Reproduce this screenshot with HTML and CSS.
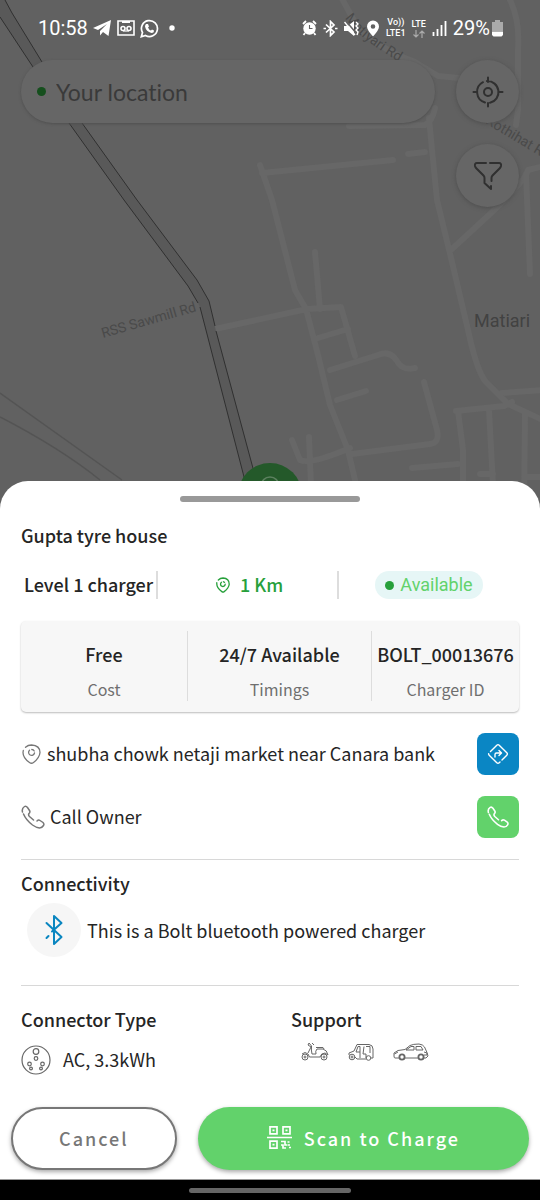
FILE: index.html
```html
<!DOCTYPE html>
<html lang="en">
<head>
<meta charset="utf-8">
<meta name="viewport" content="width=device-width, initial-scale=1">
<title>Charger details</title>
<link rel="stylesheet" href="styles.css">
</head>
<body>
<div class="screen">
  <section class="map" aria-label="Map">
    <svg class="map-art" viewBox="0 0 540 521" preserveAspectRatio="xMidYMin slice" aria-hidden="true">
      <g class="road">
        <path d="M340 -5L358 28Q385 52 415 62L438 76L470 79M510 0Q520 20 518 50V110L516 125M429 118L432 150L437 200L452 262L468 330Q477 372 486 382L508 404L545 421M349 126L425 125Q432 122 435 108M262 173L393 160M408 154L425 152M260 165L272 200L295 290L306 309L318 355L330 405L348 450L362 510M315 252L320 309M215 329L307 309L341 307L355 356M318 338L348 329M330 370L378 355Q390 350 397 361Q402 371 415 368M337 400L366 391M424 382L437 430Q440 443 430 444L352 454M292 440L300 460Q310 465 350 448M309 437L312 510M452 249L490 214Q526 180 528 170L548 165M526 174L530 274M502 393L545 390M456 411L504 406L512 402M458 411L463 450V510M489 410L493 485V510M525 414L524 510M412 468L458 464M480 474H493M525 477H548"/>
      </g>
      <path class="road-thin" d="M0 393L122 480M0 417Q60 448 100 480"/>
      <path class="rail-fill" d="M5 0L12 13L42 62L82 123L137 200L197 280L209 301L216 331L254 472L267 520H255L243 473L200 307L198 303L188 286L124 200L69 123L33 67L0 17V0Z"/>
      <path class="rail-line" d="M5 0L12 13L42 62L82 123L137 200L197 280L209 301L215 326M216 331L254 472L267 520M0 17L33 67L69 123L124 200L188 286L198 303M200 307L243 473L255 520"/>
      <g class="map-text">
        <path id="matiyari" class="label-path" d="M345 18Q360 40 403 64"/>
        <text><textPath href="#matiyari">Matiyari Rd</textPath></text>
        <text transform="translate(103 338) rotate(-16)">RSS Sawmill Rd</text>
        <text transform="translate(485 123) rotate(31)">Kothihat Rd</text>
        <text class="town" x="474" y="327">Matiari</text>
      </g>
      <circle cx="270" cy="495" r="32" fill="#24592a"/>
      <circle cx="270" cy="486" r="9" fill="none" stroke="#5c805f" stroke-width="1.5"/>
    </svg>

    <header class="status">
      <div class="status-group">
        <span>10:58</span>
        <svg width="19" height="18" viewBox="0 0 19 18"><path fill="#fff" d="M0 9L18 1L15.500 17L10 13L7 16.500V12L14 5L5 11Z"/></svg>
        <svg width="18" height="18" viewBox="0 0 18 18" fill="none" stroke="#fff" stroke-width="1.6"><path d="M1 2H17V16H1Z"/><path d="M5 3H13" stroke-width="2"/><circle cx="6" cy="9.500" r="2"/><circle cx="12" cy="9.500" r="2"/><path d="M6 12H12" stroke-width="1.200"/></svg>
        <svg width="19" height="19" viewBox="0 0 19 19"><path d="M1.300 17.700L2.500 13.500A8 8 0 1 1 5.500 16.500Z" fill="none" stroke="#fff" stroke-width="1.700"/><path fill="#fff" d="M6 5L8 5L9 7.500L8 8.500Q9 11 11 11.500L12 10.500L14 11.500Q14 14 11.500 14Q6 12.500 5 7.500Q5 6 6 5Z"/></svg>
        <svg class="more" width="6" height="6" viewBox="0 0 6 6"><circle cx="3" cy="3" r="2.700" fill="#fff"/></svg>
      </div>
      <div class="status-group status-right">
        <svg width="15" height="16" viewBox="0 0 15 16"><circle cx="7.500" cy="8.500" r="6.200" fill="#fff"/><path d="M1 4L4 1M14 4L11 1M3 13L1.500 15M12 13L13.500 15" stroke="#fff" stroke-width="1.800"/><path d="M7.500 5V8.500H10.500" fill="none" stroke="#616161" stroke-width="1.100"/></svg>
        <svg width="15" height="17" viewBox="0 0 15 17"><path d="M3 4.500L11 12L7.500 15.500V1.500L11 5L3 12.500M0.500 8.500H3M12 8.500H14.500" fill="none" stroke="#fff" stroke-width="1.700"/></svg>
        <svg width="16" height="17" viewBox="0 0 16 17"><path fill="#fff" d="M0 6H4L10 1V16L4 11H0Z"/><path d="M2 1L12 13" stroke="#616161" stroke-width="1.500"/><path d="M0.500 2L11 15M12 2L14 4L12 6L14 8L12 10L14 12L13 15" fill="none" stroke="#fff" stroke-width="1.400"/></svg>
        <svg width="14" height="17" viewBox="0 0 14 17"><path fill="#fff" fill-rule="evenodd" d="M7 0.500A6 6 0 0 1 13 6.500Q13 10 7 16.500Q1 10 1 6.500A6 6 0 0 1 7 0.500ZM7 4.200A2.300 2.300 0 1 0 7 8.800A2.300 2.300 0 1 0 7 4.200Z"/></svg>
        <span class="tiny"><span>Vo))</span><span>LTE1</span></span>
        <span class="tiny"><span>LTE</span><svg width="12" height="8" viewBox="0 0 12 8"><path d="M3 0V7M0.500 4.500L3 7L5.500 4.500M9 8V1M6.500 3.500L9 1L11.500 3.500" fill="none" stroke="#aaa" stroke-width="1.200"/></svg></span>
        <svg width="15" height="16" viewBox="0 0 15 16"><path d="M1.500 16V12M5.500 16V9M9.500 16V5M13.500 16V1" stroke="#fff" stroke-width="1.800"/></svg>
        <span class="battery">29%<svg width="11" height="17" viewBox="0 0 11 17"><path fill="#aaa" d="M3 0H8V2H11V11H0V2H3Z"/><path fill="#fff" d="M0 11.500H11V15L9.500 16.500H1.500L0 15Z"/></svg></span>
      </div>
    </header>

    <div class="controls">
      <label class="search"><span class="dot"></span><input type="text" placeholder="Your location" aria-label="Your location"></label>
      <div class="map-buttons">
        <button class="round" type="button" aria-label="Locate me">
          <svg width="32" height="32" viewBox="0 0 32 32" fill="none" stroke="#303030" stroke-width="2" stroke-linecap="round"><path d="M13 26.500A11 11 0 0 1 11 6.200M15 5.100A11 11 0 0 1 18 26.800M16 1.500V6M26.500 16H30.500M16 27V30.500M1.500 16H5M9.200 24.500L9.800 25"/><circle cx="16" cy="16" r="4"/></svg>
        </button>
        <button class="round" type="button" aria-label="Filter">
          <svg width="30" height="30" viewBox="0 0 30 30" fill="none" stroke="#303030" stroke-width="2" stroke-linecap="round" stroke-linejoin="round"><path d="M13 2H4Q1.500 2 2 5Q2.300 6 3 7L10.500 14.500Q11.500 15.500 11.500 17V22L18 28V25M17 2H26Q28.500 2 28 5Q27.700 6 27 7L19.500 14.500Q18.500 15.500 18.500 17V20"/></svg>
        </button>
      </div>
    </div>
  </section>

  <main class="sheet">
    <div class="handle"></div>
    <h1 class="title">Gupta tyre house</h1>

    <div class="meta">
      <div class="meta-item level">Level 1 charger</div>
      <div class="meta-item distance">
        <svg width="14" height="16" viewBox="0 0 18 20" fill="none" stroke="#27a03b" stroke-width="1.700" stroke-linecap="round"><path d="M3 3.500Q5.500 1 9 1Q17 1.500 17 9Q16.500 14 10.500 18.500Q9 19.500 7.500 18.500Q1 14 1 8.500V7"/><path d="M7 6.500A3 3 0 1 0 11.800 9M9.500 5.800L11 6.500"/></svg>
        <span>1 Km</span>
      </div>
      <div class="meta-item"><span class="badge"><span class="dot"></span>Available</span></div>
    </div>

    <div class="stats">
      <div class="stat"><strong>Free</strong><span>Cost</span></div>
      <div class="stat"><strong>24/7 Available</strong><span>Timings</span></div>
      <div class="stat"><strong>BOLT_00013676</strong><span>Charger ID</span></div>
    </div>

    <div class="row">
      <svg width="21" height="20" viewBox="0 0 19 20" fill="none" stroke="#777" stroke-width="1.300" stroke-linecap="round"><path d="M3.500 3.200Q6 1 9.500 1Q18 1.500 18 8.500Q17.500 14 11.500 18.500Q9.500 20 7.500 18.500Q1 14 1 8.500L1.300 6.500"/><path d="M7.500 6.200A3 3 0 1 0 12.500 9M9.800 5.500Q11.500 5.500 12.200 7"/></svg>
      <span class="row-text">shubha chowk netaji market near Canara bank</span>
      <button class="square blue" type="button" aria-label="Directions">
        <svg width="22" height="22" viewBox="0 0 22 22" fill="none" stroke="#fff" stroke-width="1.400" stroke-linecap="round" stroke-linejoin="round"><path d="M3.500 8.500L9.800 2.200Q11 1 12.200 2.200L19.800 9.800Q21 11 19.800 12.200L15 17M13 19L12.200 19.800Q11 21 9.800 19.800L2.200 12.200Q1.500 11.500 1.600 10.800M8 14V11.500Q8 10 9.500 10H14M12 7.500L14.500 10L12 12.500"/></svg>
      </button>
    </div>
    <div class="row">
      <svg width="24" height="24" viewBox="0 0 24 24" fill="none" stroke="#777" stroke-width="1.500" stroke-linecap="round"><path d="M1.500 7Q0.500 3.500 3.500 1.500Q5 0.500 6.500 2.500L8.500 5.500Q9.500 7 8 8.500Q7 10 8.500 11.500L12.500 15M2.500 9Q5 15 11.500 20Q15 22.500 18.500 23Q21 23 22.500 20.500Q23.500 19 22 17.500L19 15.500Q17.500 14.500 16 16"/></svg>
      <span class="row-text">Call Owner</span>
      <button class="square green" type="button" aria-label="Call owner">
        <svg width="22" height="22" viewBox="0 0 24 24" fill="none" stroke="#fff" stroke-width="1.700" stroke-linecap="round"><path d="M1.500 7Q0.500 3.500 3.500 1.500Q5 0.500 6.500 2.500L8.500 5.500Q9.500 7 8 8.500Q7 10 8.500 11.500L12.500 15M2.500 9Q5 15 11.500 20Q15 22.500 18.500 23Q21 23 22.500 20.500Q23.500 19 22 17.500L19 15.500Q17.500 14.500 16 16"/></svg>
      </button>
    </div>

    <section class="connectivity">
      <h2 class="title">Connectivity</h2>
      <div class="bolt">
        <span class="bubble"><svg width="18" height="32" viewBox="0 0 18 32" fill="none" stroke="#0a86c0" stroke-width="2" stroke-linecap="round" stroke-linejoin="round"><path d="M1.500 9L16.500 23L9 30V2L16.500 9L7 17.500M3.500 22L1.500 24"/></svg></span>
        <span>This is a Bolt bluetooth powered charger</span>
      </div>
    </section>

    <section class="specs">
      <div>
        <h2 class="title">Connector Type</h2>
        <div class="plug">
          <svg width="30" height="30" viewBox="0 0 30 30" fill="none" stroke="#666" stroke-width="1.200"><circle cx="15" cy="15" r="14"/><circle cx="15" cy="6.500" r="2.800"/><circle cx="15" cy="13.500" r="1.800"/><circle cx="8.500" cy="19" r="1.800"/><circle cx="21.500" cy="19" r="1.800"/><circle cx="10" cy="23.500" r="1.400"/><circle cx="20" cy="23.500" r="1.400"/></svg>
          <span class="plug-text">AC, 3.3kWh</span>
        </div>
      </div>
      <div>
        <h2 class="title">Support</h2>
        <div class="vehicles">
          <svg width="28" height="19" viewBox="0 0 28 19" fill="none" stroke="#666" stroke-width="1" stroke-linejoin="round"><circle cx="4" cy="15" r="3"/><circle cx="4" cy="15" r="1"/><circle cx="23" cy="15" r="3"/><circle cx="23" cy="15" r="1"/><path d="M1 12Q4 9 7 12L8.500 15H19Q20 11 24 11L27 13Q26 8 22 7H16Q14 9 15 12H11Q10 8 10.500 4L8 1L7 3L10 5L7 11M11 1L13 3M15 5.500H22L23 7"/></svg>
          <svg width="26" height="18" viewBox="0 0 26 18" fill="none" stroke="#666" stroke-width="1" stroke-linejoin="round"><circle cx="4" cy="14" r="2.800"/><circle cx="4" cy="14" r="1"/><circle cx="20.500" cy="15" r="2.300"/><path d="M1 12V10L6 8L9 1.500H21Q25 2 25 6V15H23M7 14L9 16H18M10 3.500L8 9H12V3.500ZM12 9V15M16 3.500L15 11H18V15M18 3.500H22V10"/></svg>
          <svg width="36" height="18" viewBox="0 0 36 18" fill="none" stroke="#666" stroke-width="1" stroke-linejoin="round"><circle cx="9" cy="14" r="2.600" stroke-width="1.800"/><circle cx="28" cy="14" r="2.600" stroke-width="1.800"/><path d="M6 15H2Q1 15 1 13V10L5 7.500L12 6.500L17 2.500Q20 1 26 1Q30 1.500 31.500 4L34 9.500L35 13L33 15H31M12 15H25M13 7L18 3.500H21V7ZM23 3.500H28L30 7H23ZM1.500 11L5 9M31 9L34 10V12H31"/></svg>
        </div>
      </div>
    </section>

    <div class="actions">
      <button class="pill outline" type="button">Cancel</button>
      <button class="pill solid" type="button">
        <svg width="25" height="25" viewBox="0 0 25 25" fill="none" stroke="#fff" stroke-width="1.700"><path d="M3 1.800H10V8.800H3ZM16 1.800H23V8.800H16ZM3 16.200H10V23.200H3ZM0 12.500H25"/><path d="M5.500 5.300H7.500M18.500 5.300H20.500M5.500 19.700H7.500M14 16.500H18V20H20.500M14 20H16V23H19M20.500 17H22.500M22 22.500H24M21 20L23 20"/></svg>
        <span>Scan to Charge</span>
      </button>
    </div>
  </main>
  <footer class="nav"><span class="nav-pill"></span></footer>
</div>
</body>
</html>
```
FILE: styles.css
```css
* {
  box-sizing: border-box;
}

body {
  margin: 0;
  background: #616161;
  color: #252525;
  font-family: "Noto Sans CJK SC", "Noto Sans", sans-serif;
  font-size: 18px;
  line-height: 24px;
}

button,
input {
  font: inherit;
  border: 0;
  padding: 0;
}

svg {
  flex: none;
}

.screen {
  display: flex;
  flex-direction: column;
  min-height: 100vh;
}

.map {
  position: relative;
  flex: 1;
  min-height: 260px;
  overflow: hidden;
}

.map-art {
  position: absolute;
  inset: 0;
  width: 100%;
  height: 100%;
}

.road {
  fill: none;
  stroke: #676767;
  stroke-width: 6;
  stroke-linejoin: round;
  stroke-linecap: round;
}

.road-thin {
  fill: none;
  stroke: #545454;
  stroke-width: 1.5;
}

.rail-fill {
  fill: #595959;
}

.rail-line {
  fill: none;
  stroke: #303030;
  stroke-width: 1;
}

.label-path {
  fill: none;
}

.map-text {
  fill: #4a4a4a;
  font-family: Roboto, sans-serif;
  font-size: 14px;
}

.town {
  fill: #424242;
  font-size: 18px;
}

.status {
  position: relative;
  display: flex;
  justify-content: space-between;
  padding: 16px 37px 0 38px;
  color: #fff;
  font-family: Roboto, sans-serif;
  font-size: 20px;
}

.status-group {
  display: flex;
  align-items: center;
  gap: 5px;
}

.status-right {
  gap: 6px;
}

.more {
  margin-left: 5px;
}

.tiny {
  display: grid;
  justify-items: center;
  font-size: 9px;
  font-weight: 500;
  line-height: 11px;
}

.battery {
  display: flex;
  align-items: center;
  gap: 2px;
}

.controls {
  position: relative;
  display: flex;
  gap: 21px;
  padding: 20px 21px;
}

.search {
  display: flex;
  flex: 1;
  align-items: center;
  gap: 10px;
  min-width: 0;
  height: 63px;
  padding: 0 16px;
  border-radius: 32px;
  background: #666;
  box-shadow: 0 1px 3px #505050;
}

.dot {
  flex: none;
  width: 9px;
  height: 9px;
  border-radius: 50%;
  background: #27a03b;
}

.search .dot {
  background: #154f1d;
}

.search input {
  flex: 1;
  min-width: 0;
  background: none;
  color: #303030;
  font-family: Lato, sans-serif;
  font-size: 23px;
  font-variant-ligatures: none;
}

.search input::placeholder {
  color: #3a3a3a;
  opacity: 1;
}

.map-buttons {
  display: grid;
  gap: 21px;
}

.round {
  display: grid;
  place-items: center;
  width: 63px;
  height: 63px;
  border-radius: 50%;
  background: #666;
  box-shadow: 0 1px 4px #4e4e4e;
}

.sheet {
  position: relative;
  margin-top: -40px;
  padding: 15px 21px 9px;
  border-bottom: 1px solid #999;
  border-radius: 28px 28px 0 0;
  background: #fff;
}

.handle {
  width: 180px;
  height: 6px;
  margin: 0 auto 21px;
  border-radius: 3px;
  background: #999;
}

.title {
  margin: 0;
  font-size: 18px;
  font-weight: 500;
  line-height: 24px;
}

.meta {
  display: grid;
  grid-template-columns: 137fr 181fr 180fr;
  align-items: center;
  margin-top: 24px;
}

.meta-item {
  display: flex;
  align-items: center;
  justify-content: center;
  height: 28px;
  border-right: 2px solid #ddd;
  font-weight: 500;
  white-space: nowrap;
}

.meta-item:last-child {
  border: 0;
}

.level,
.distance span,
.row-text,
.plug-text {
  padding-bottom: 2px;
}

.distance {
  gap: 10px;
  padding-left: 4px;
  color: #27a03b;
}

.badge {
  display: flex;
  align-items: center;
  gap: 6px;
  height: 28px;
  padding: 0 10px;
  border-radius: 14px;
  background: #e6f6f6;
  color: #62d26b;
  font-family: Roboto, sans-serif;
  font-weight: 400;
}

.stats {
  display: grid;
  grid-template-columns: 166fr 184fr 148fr;
  margin-top: 22px;
  padding: 10px 0 11px;
  border-radius: 5px;
  background: #f7f7f7;
  box-shadow: 0 1px 2px #bbb;
}

.stat {
  display: grid;
  gap: 12px;
  padding: 11px 0 1px;
  border-left: 1px solid #ddd;
  text-align: center;
}

.stat:first-child {
  border: 0;
}

.stat strong {
  font-weight: 500;
}

.stat span {
  color: #6f6f6f;
  font-size: 16px;
  line-height: 22px;
}

.row {
  display: flex;
  align-items: center;
  gap: 5px;
  min-height: 42px;
  margin-top: 21px;
}

.row-text {
  flex: 1;
}

.square {
  display: grid;
  flex: none;
  place-items: center;
  width: 42px;
  height: 42px;
  border-radius: 8px;
}

.blue {
  background: #0a86c4;
}

.green {
  background: #62d26b;
}

.connectivity {
  margin-top: 21px;
  padding: 11px 0 28px;
  border-top: 1px solid #d8d8d8;
  border-bottom: 1px solid #d8d8d8;
}

.bolt {
  display: flex;
  align-items: center;
  gap: 6px;
  margin-top: 8px;
  padding-left: 6px;
}

.bubble {
  display: grid;
  flex: none;
  place-items: center;
  width: 54px;
  height: 54px;
  border-radius: 50%;
  background: #f6f6f6;
}

.specs {
  display: grid;
  grid-template-columns: 270fr 228fr;
  margin-top: 21px;
}

.plug {
  display: flex;
  align-items: center;
  gap: 12px;
  margin-top: 14px;
}

.vehicles {
  display: flex;
  align-items: center;
  gap: 19px;
  margin-top: 11px;
  padding-left: 10px;
}

.actions {
  display: grid;
  grid-template-columns: 1fr 2fr;
  gap: 21px;
  margin: 32px -10px 0;
}

.pill {
  display: flex;
  align-items: center;
  justify-content: center;
  gap: 12px;
  height: 63px;
  padding-bottom: 2px;
  border-radius: 32px;
  font-weight: 500;
  letter-spacing: 2px;
  box-shadow: 0 2px 4px #aaa;
}

.outline {
  border: 2px solid #777;
  background: #fff;
  color: #777;
}

.solid {
  background: #62d26b;
  color: #fff;
}

.nav {
  display: grid;
  place-items: center;
  height: 20px;
  background: #000;
}

.nav-pill {
  width: 162px;
  height: 5px;
  border-radius: 3px;
  background: #666;
}
```
